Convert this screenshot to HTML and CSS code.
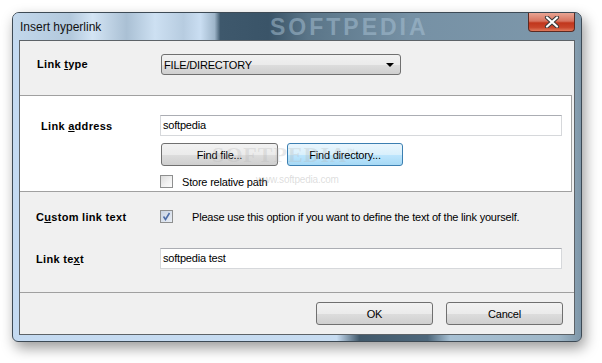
FILE: index.html
```html
<!DOCTYPE html>
<html lang="en">

<head>
  <meta charset="UTF-8">
  <title>Insert hyperlink</title>
  <link rel="stylesheet" href="styles.css">
</head>

<body>
  <div class="window">
    <div class="titlebar">
      <span class="title">Insert hyperlink</span>
      <span class="watermark">SOFTPEDIA</span>
      <div class="close">
        <svg width="16" height="12" viewBox="0 0 16 12">
          <path d="M3 1.5 L13 10.5 M13 1.5 L3 10.5" stroke="#3a3a3a" stroke-width="4.2" stroke-linecap="round"/>
          <path d="M3 1.5 L13 10.5 M13 1.5 L3 10.5" stroke="#ffffff" stroke-width="2.2" stroke-linecap="round"/>
        </svg>
      </div>
    </div>

    <div class="client">
      <div class="typeSection">
        <div class="label">Link <u>t</u>ype</div>
        <div class="combo">
          <span>FILE/DIRECTORY</span>
          <span class="arrow"></span>
        </div>
      </div>

      <div class="addressSection">
        <div class="row">
          <div class="label labelAddress">Link <u>a</u>ddress</div>
          <div class="input wide">softpedia</div>
        </div>
        <div class="buttons">
          <div class="button">Find file...</div>
          <div class="button hot">Find directory...</div>
        </div>
        <div class="checkRow">
          <span class="check"></span>
          <span>Store relative path</span>
        </div>
        <div class="stamp">SOFTPEDIA<sup>™</sup></div>
        <div class="stampUrl">www.softpedia.com</div>
      </div>

      <div class="customSection">
        <div class="row">
          <div class="label">C<u>u</u>stom link text</div>
          <span class="check checked">
            <svg width="11" height="11" viewBox="0 0 11 11">
              <path d="M2.5 5.5 L4.5 8.5 L8.5 2" fill="none" stroke="#4f6ea8" stroke-width="1.6"/>
            </svg>
          </span>
          <span class="hint">Please use this option if you want to define the text of the link yourself.</span>
        </div>
        <div class="row textRow">
          <div class="label">Link te<u>x</u>t</div>
          <div class="input wide">softpedia test</div>
        </div>
      </div>

      <div class="footer">
        <div class="button big">OK</div>
        <div class="button big">Cancel</div>
      </div>
    </div>
  </div>
</body>

</html>
```

FILE: styles.css
```css
body {
  margin: 0;
  width: 602px;
  height: 363px;
  background: #fff;
  font-family: "Liberation Sans", sans-serif;
  font-size: 11px;
  letter-spacing: -0.2px;
  color: #000;
  overflow: hidden;
}

.window {
  margin: 12px 0 0 12px;
  width: 570px;
  height: 330px;
  box-sizing: border-box;
  border: 1px solid #3d4a55;
  border-radius: 7px 7px 6px 6px;
  background: linear-gradient(90deg, #c4daf1 0%, #c7dcf1 57%, #41596b 61%, #4d677b 73%, #a7c0d3 77%, #9fb7c8 96%, #7e96a8 100%);
  box-shadow: 3px 6px 14px rgba(0, 0, 0, 0.4);
  display: flex;
  flex-direction: column;
  overflow: hidden;
}

.titlebar {
  position: relative;
  height: 27px;
  display: flex;
  align-items: center;
  padding-left: 7px;
  background: linear-gradient(90deg, #c3d8ec 0%, #b2c8dc 10%, #d3e4f4 14%, #aac0d4 20%, #cde0f2 25%, #b7cce0 30%, #cadef2 33%, #9eb5c9 35.5%, #3e586c 36.5%, #3a5468 45%, #5a7588 52%, #7691a5 70%, #7e98ab 100%);
  overflow: hidden;
}

.title {
  font-size: 12px;
  letter-spacing: 0;
  color: #111;
  position: relative;
  z-index: 1;
}

.watermark {
  position: absolute;
  left: 257px;
  top: 2px;
  font-weight: bold;
  font-size: 23px;
  letter-spacing: 3px;
  color: rgba(170, 195, 214, 0.5);
  line-height: 24px;
}

.close {
  position: absolute;
  right: 6px;
  top: 0;
  width: 47px;
  height: 19px;
  box-sizing: border-box;
  border: 1px solid #5b2a22;
  border-top: none;
  border-radius: 0 0 4px 4px;
  background: linear-gradient(#e8a493 0%, #d7735f 45%, #c1361c 55%, #c8452b 80%, #e07a5c 100%);
  display: flex;
  align-items: center;
  justify-content: center;
}

.client {
  margin: 0 6px 6px 6px;
  flex: 1;
  border: 1px solid #5d6368;
  background: #f0f0f0;
  display: flex;
  flex-direction: column;
}

.label {
  font-weight: bold;
  font-size: 11px;
  letter-spacing: 0.3px;
  width: 124px;
  flex: none;
}

.typeSection {
  height: 54px;
  display: flex;
  align-items: flex-start;
  padding: 13px 0 0 17px;
  box-sizing: border-box;
}

.typeSection .label {
  line-height: 21px;
}

.combo {
  width: 240px;
  height: 21px;
  box-sizing: border-box;
  border: 1px solid #707070;
  border-radius: 3px;
  background: linear-gradient(#f2f2f2 0%, #ebebeb 50%, #dddddd 51%, #cfcfcf 100%);
  display: flex;
  align-items: center;
  justify-content: space-between;
  padding: 0 6px 0 2px;
}

.arrow {
  width: 0;
  height: 0;
  border-left: 4px solid transparent;
  border-right: 4px solid transparent;
  border-top: 4px solid #000;
}

.addressSection {
  position: relative;
  height: 97px;
  box-sizing: border-box;
  margin-right: 2px;
  border-top: 1px solid #a0a0a0;
  border-bottom: 1px solid #a0a0a0;
  border-right: 1px solid #a0a0a0;
  background: #fff;
  padding: 19px 0 0 21px;
}

.row {
  display: flex;
  align-items: center;
}

.labelAddress {
  width: 119px;
}

.input {
  height: 21px;
  box-sizing: border-box;
  border: 1px solid #d6d8db;
  border-top-color: #abadb3;
  background: #fff;
  padding-left: 2px;
  line-height: 19px;
}

.wide {
  width: 402px;
}

.buttons {
  display: flex;
  gap: 9px;
  margin: 7px 0 0 120px;
}

.button {
  height: 23px;
  width: 117px;
  box-sizing: border-box;
  border: 1px solid #707070;
  border-radius: 3px;
  background: linear-gradient(#f2f2f2 0%, #ebebeb 50%, #dddddd 51%, #cfcfcf 100%);
  display: flex;
  align-items: center;
  justify-content: center;
}

.hot {
  width: 116px;
  border-color: #3c7fb1;
  background: linear-gradient(#eaf6fd 0%, #d9f0fc 50%, #bee6fd 51%, #a7d9f5 100%);
}

.checkRow {
  display: flex;
  align-items: center;
  gap: 9px;
  margin: 9px 0 0 119px;
}

.check {
  width: 13px;
  height: 13px;
  box-sizing: border-box;
  border: 1px solid #8e8f8f;
  background: linear-gradient(135deg, #dcdcdc 0%, #f2f2f2 60%, #fbfbfb 100%);
  display: inline-flex;
  align-items: center;
  justify-content: center;
  flex: none;
}

.checked {
  background: linear-gradient(135deg, #c9d3e2 0%, #e9eef5 100%);
}

.stamp {
  position: absolute;
  left: 192px;
  top: 46px;
  font-family: "Liberation Serif", serif;
  font-weight: bold;
  font-size: 22px;
  letter-spacing: 1px;
  color: rgba(180, 180, 180, 0.3);
}

.stamp sup {
  font-size: 8px;
}

.stampUrl {
  position: absolute;
  left: 236px;
  top: 78px;
  font-size: 10px;
  color: rgba(170, 170, 170, 0.4);
}

.customSection {
  height: 101px;
  box-sizing: border-box;
  border-bottom: 1px solid #a0a0a0;
  padding: 18px 0 0 16px;
}

.hint {
  margin-left: 19px;
}

.textRow {
  margin-top: 25px;
}

.footer {
  flex: 1;
  display: flex;
  justify-content: flex-end;
  align-items: flex-start;
  gap: 13px;
  padding: 9px 11px 0 0;
}

.big {
  width: 117px;
}
```
